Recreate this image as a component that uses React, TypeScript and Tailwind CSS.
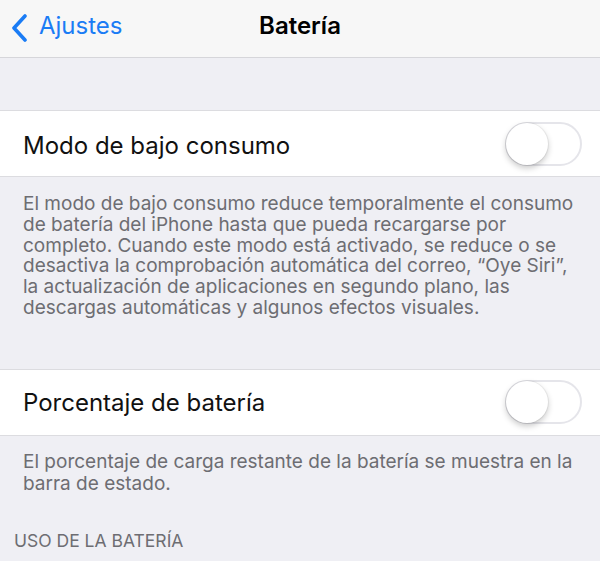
import React from "react";

function Toggle() {
  return (
    <div className="relative w-[77px] h-[44px] rounded-full border-2 border-[#e5e5ea] bg-white shrink-0">
      <div className="absolute left-[-1px] top-[-1px] w-[42px] h-[42px] rounded-full bg-white shadow-[0_3px_6px_rgba(0,0,0,0.22),0_0_0_1px_rgba(0,0,0,0.05)]" />
    </div>
  );
}

const desc1 = [
  "El modo de bajo consumo reduce temporalmente el consumo",
  "de batería del iPhone hasta que pueda recargarse por",
  "completo. Cuando este modo está activado, se reduce o se",
  "desactiva la comprobación automática del correo, “Oye Siri”,",
  "la actualización de aplicaciones en segundo plano, las",
  "descargas automáticas y algunos efectos visuales.",
];

const desc2 = [
  "El porcentaje de carga restante de la batería se muestra en la",
  "barra de estado.",
];

export default function App() {
  return (
    <div
      className="w-[600px] h-[561px] bg-[#efeff4] overflow-hidden"
      style={{ fontFamily: "Inter, 'Noto Sans', sans-serif" }}
    >
      <div className="relative h-[58px] bg-[#f7f7f7] border-b border-[#d6d6da] flex items-center justify-center">
        <div className="absolute left-0 top-0 h-full flex items-center pl-[10px] text-[#1a7cf5]">
          <svg width="18" height="28" viewBox="0 0 18 28" className="mt-[-2px]">
            <path d="M15 2 L4 14 L15 26" fill="none" stroke="#1a7cf5" strokeWidth="3.6" strokeLinecap="round" strokeLinejoin="round" />
          </svg>
          <span className="ml-[11px] text-[24px] mt-[-5px]">Ajustes</span>
        </div>
        <div className="text-[24px] font-semibold text-black mt-[-6px]">Batería</div>
      </div>
      <div className="h-[52px]" />
      <div className="bg-white border-y border-[#dcdce0] h-[67px] flex items-center justify-between pl-[23px] pr-[18px]">
        <span className="text-[24px] text-[#111] mt-[4px]">Modo de bajo consumo</span>
        <Toggle />
      </div>
      <div className="px-[23px] pt-[17px] text-[19px] leading-[20.8px] text-[#6d6d72]">
        {desc1.map((l) => (
          <div key={l} className="whitespace-nowrap">{l}</div>
        ))}
      </div>
      <div className="h-[50px]" />
      <div className="bg-white border-y border-[#dcdce0] h-[67px] flex items-center justify-between pl-[23px] pr-[18px]">
        <span className="text-[24px] text-[#111] mt-[2px]">Porcentaje de batería</span>
        <Toggle />
      </div>
      <div className="px-[23px] pt-[15px] text-[19px] leading-[22px] text-[#6d6d72]">
        {desc2.map((l) => (
          <div key={l} className="whitespace-nowrap">{l}</div>
        ))}
      </div>
      <div className="pl-[14px] pt-[33px] text-[17.5px] text-[#6d6d72]">USO DE LA BATERÍA</div>
    </div>
  );
}
